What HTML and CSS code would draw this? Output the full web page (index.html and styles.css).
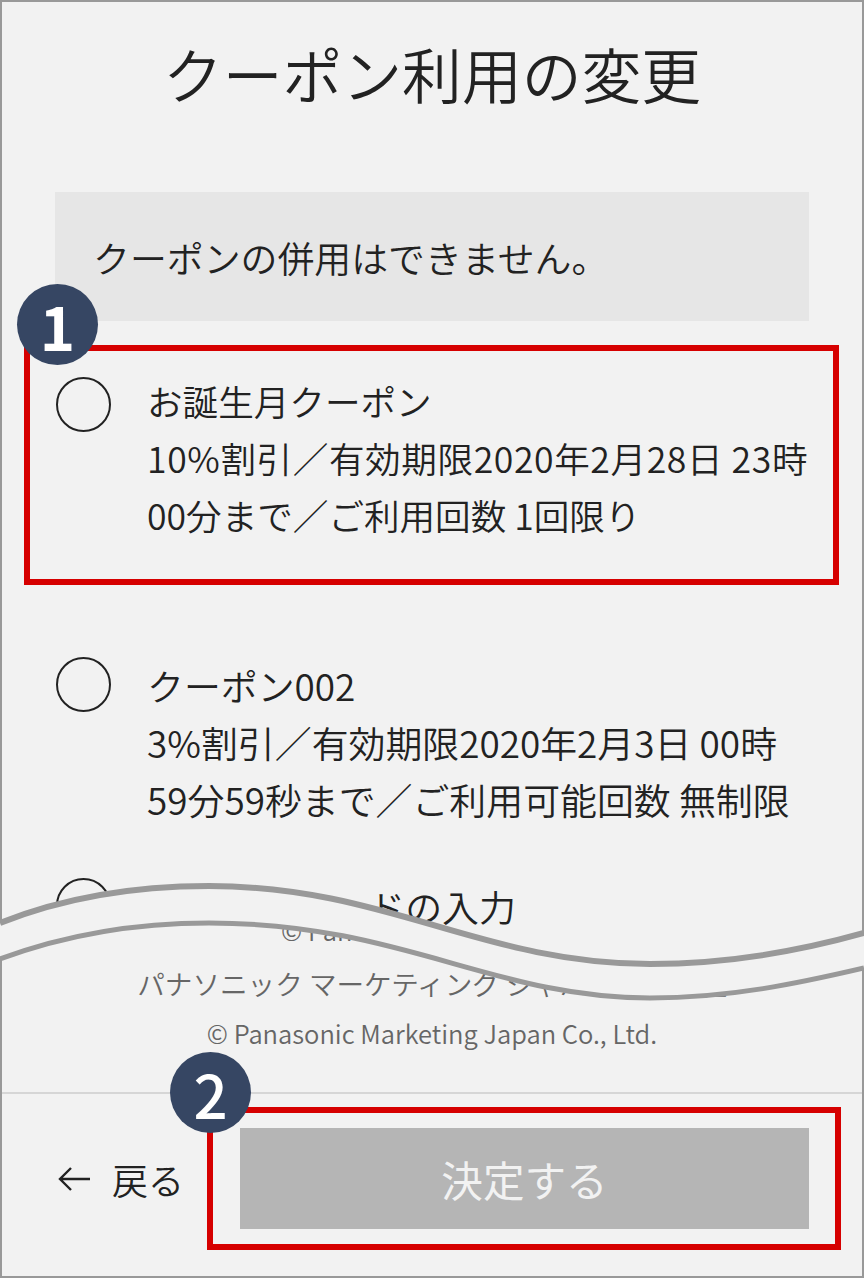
FILE: index.html
```html
<!DOCTYPE html>
<html lang="ja">
	<head>
		<meta charset="utf-8">
		<title>クーポン利用の変更</title>
		<link rel="stylesheet" href="styles.css">
	</head>
	<body>
		<div class="frame">
			<div class="main">
				<h1 class="title">クーポン利用の変更</h1>
				<div class="notice">クーポンの併用はできません。</div>
				<ul class="coupons">
					<li class="coupon coupon-first">
						<span class="radio"></span>
						<div class="coupon-text">
							お誕生月クーポン<br>
							<span class="coupon-wide">10%割引／有効期限2020年2月28日 23時</span><br>
							00分まで／ご利用回数 1回限り
						</div>
					</li>
					<li class="coupon">
						<span class="radio"></span>
						<div class="coupon-text">
							クーポン002<br>
							3%割引／有効期限2020年2月3日 00時<br>
							59分59秒まで／ご利用可能回数 無制限
						</div>
					</li>
					<li class="coupon">
						<span class="radio"></span>
						<div class="coupon-text">クーポンコードの入力</div>
					</li>
				</ul>
				<div class="legal">
					<p class="legal-en legal-cut">© Panasonic</p>
					<p class="legal-ja">パナソニック マーケティング ジャパン株式会社</p>
					<p class="legal-en">© Panasonic Marketing Japan Co., Ltd.</p>
				</div>
			</div>
			<div class="bar">
				<a class="back" href="#">
					<svg class="back-arrow" viewBox="0 0 32 26" width="32" height="26">
						<path d="M32 13H2M13 2L2 13l11 11" fill="none" stroke="#222" stroke-width="2.4"/>
					</svg>
					戻る
				</a>
				<button class="submit" type="button">決定する</button>
			</div>

			<!-- wave break between the two captures -->
			<svg class="wave" viewBox="0 0 860 130" width="860" height="130">
				<path class="wave-fill" d="M-2 40C68 12 138 3 207 3C385 3 480 81 648 81C728 81 798 68 862 50V85C798 100 728 115 648 115C490 115 400 40 207 40C138 40 68 50 -2 76Z"/>
				<path class="wave-line" d="M-2 40C68 12 138 3 207 3C385 3 480 81 648 81C728 81 798 68 862 50"/>
				<path class="wave-line wave-line-thin" d="M-2 76C68 50 138 40 207 40C400 40 490 115 648 115C728 115 798 100 862 85"/>
			</svg>

			<div class="mark mark-one"></div>
			<div class="mark mark-two"></div>
			<div class="badge badge-one">1</div>
			<div class="badge badge-two">2</div>
		</div>
	</body>
</html>
```

FILE: styles.css
```css
* {margin: 0;padding: 0;box-sizing: border-box;list-style: none;}
html,body {width: 864px;height: 1278px;overflow: hidden;}
body {background: #f2f2f2;color: #222;font-family: "Noto Sans CJK JP", "Noto Sans", sans-serif;font-weight: 350;}
a {color: inherit;text-decoration: none;}

.frame {position: relative;display: flex;flex-direction: column;width: 864px;height: 1278px;border: 2px solid #999;}
.main {flex: 1;overflow: hidden;padding: 31px 53px 0;}
.title {height: 80px;margin-bottom: 79px;font-size: 59.8px;font-weight: 350;line-height: 80px;text-align: center;white-space: nowrap;}
.notice {height: 129px;padding: 0 38px;background: #e6e6e6;font-size: 36.9px;line-height: 130px;}

.coupons {margin-top: 51px;}
.coupon {display: flex;margin-bottom: 50px;font-size: 36.9px;line-height: 57px;}
.coupon-first {margin-bottom: 114px;font-size: 35.6px;}
.coupon-first .radio {margin-top: 5px;}
.coupon-wide {letter-spacing: .6px;}
.radio {flex: none;width: 55px;height: 55px;margin: 0 37px 0 1px;border: 2.5px solid #222;border-radius: 50%;}
.coupon-text {margin-left: -1px;white-space: nowrap;}

.legal {margin: -80px -53px 0;color: #666;line-height: 50px;text-align: center;white-space: nowrap;}
.legal-en {font-size: 25.5px;}
.legal-ja {font-size: 27.6px;}
.legal-cut {margin-bottom: 3px;padding-right: 154px;}

.bar {display: flex;flex: none;align-items: center;justify-content: space-between;height: 184px;padding: 0 53px 13px 56px;border-top: 2px solid #d6d6d6;}
.back {display: flex;align-items: center;gap: 22px;font-size: 36px;}
.submit {width: 569px;height: 101px;border: 0;background: #b5b5b5;color: #f2f2f2;font-family: inherit;font-size: 41.6px;font-weight: 400;}

.wave {position: absolute;left: 0;top: 881px;overflow: visible;}
.wave-fill {fill: #f2f2f2;}
.wave-line {fill: none;stroke: #999;stroke-width: 6;}
.wave-line-thin {stroke-width: 5;}

.mark {position: absolute;border: 6px solid #d60000;}
.mark-one {left: 22px;top: 343px;width: 815px;height: 240px;}
.mark-two {left: 205px;top: 1105px;width: 634px;height: 143px;}

.badge {position: absolute;width: 81px;height: 81px;border-radius: 50%;background: #364663;color: #fff;font-size: 60px;line-height: 81px;text-align: center;}
.badge-one {left: 15px;top: 282px;font-weight: 700;}
.badge-two {left: 168px;top: 1050px;font-weight: 500;}
```
